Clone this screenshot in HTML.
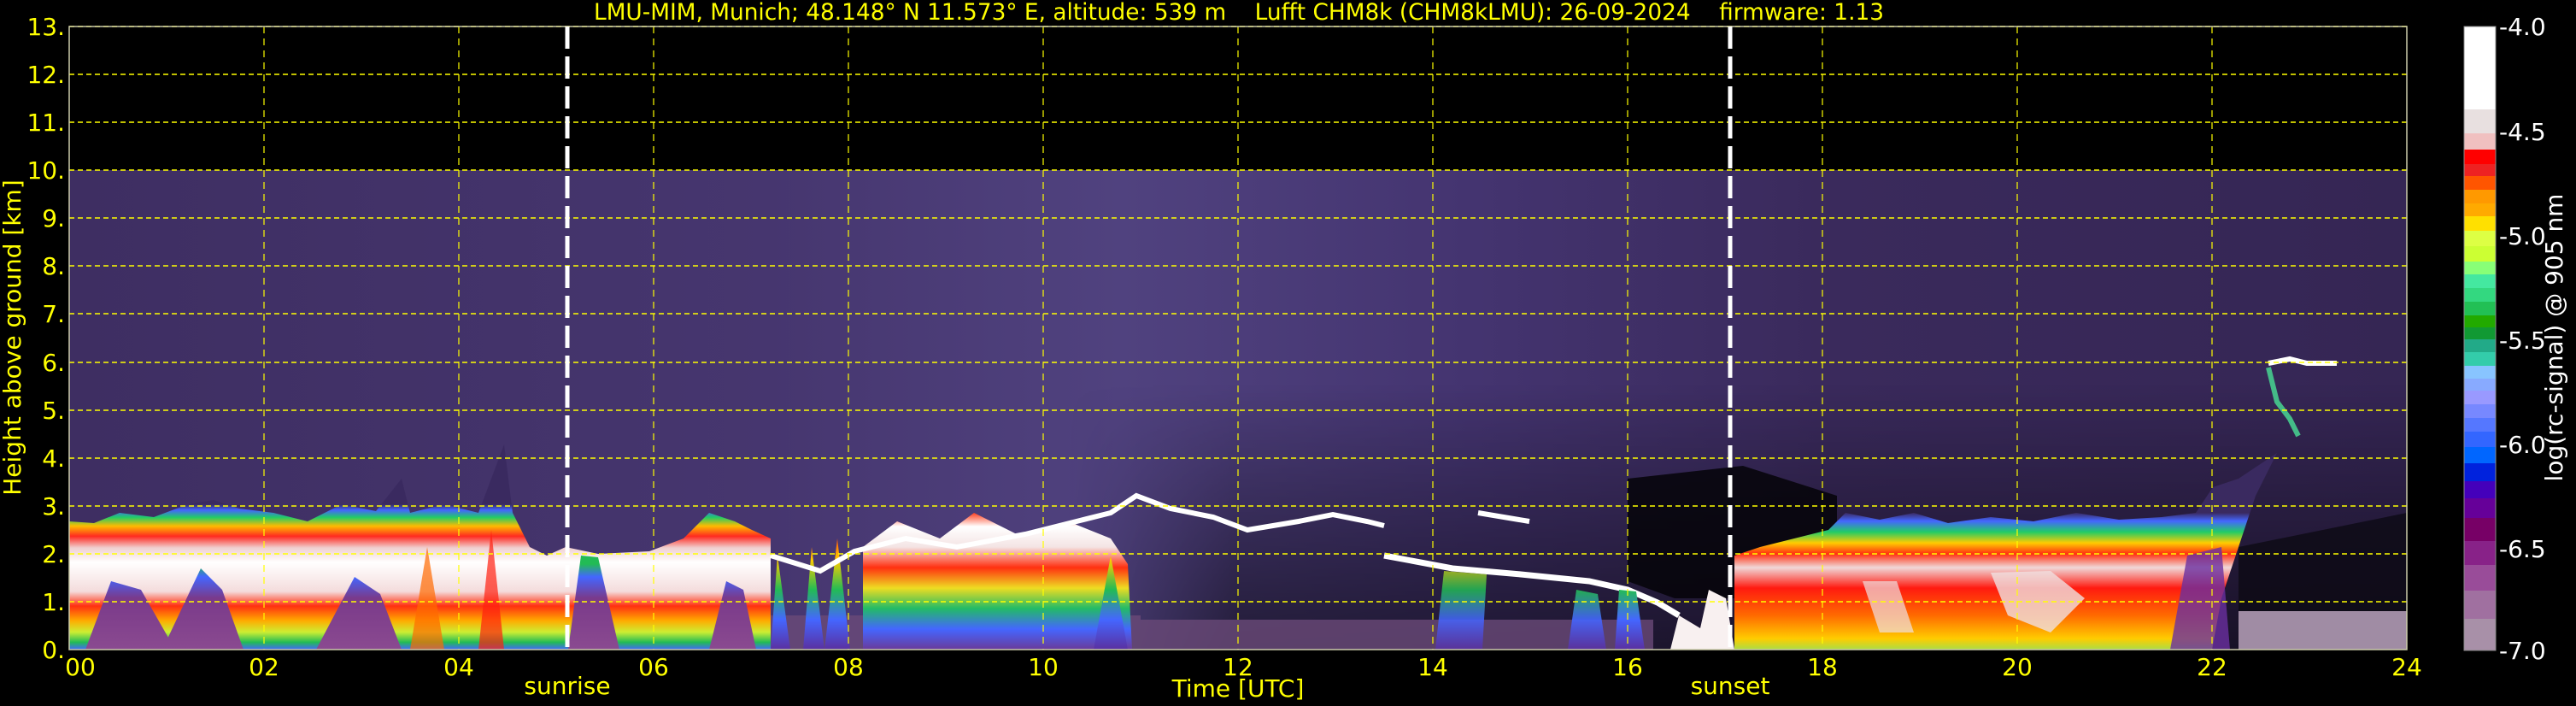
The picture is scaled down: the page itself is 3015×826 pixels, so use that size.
<!DOCTYPE html>
<html><head><meta charset="utf-8"><style>
html,body{margin:0;padding:0;background:#000;width:3015px;height:826px;overflow:hidden}
svg{display:block}
text{font-family:"DejaVu Sans","Liberation Sans",sans-serif;fill:#ffff00;white-space:pre}
</style></head><body>
<svg width="3015" height="826" viewBox="0 0 3015 826" xmlns="http://www.w3.org/2000/svg">
<defs>
<linearGradient id="noiseH" x1="81" x2="2817" y1="0" y2="0" gradientUnits="userSpaceOnUse">
<stop offset="0" stop-color="#3e2e62"/><stop offset="0.3" stop-color="#46366f"/>
<stop offset="0.45" stop-color="#50427f"/><stop offset="0.6" stop-color="#443470"/>
<stop offset="0.75" stop-color="#3a2a5c"/><stop offset="1" stop-color="#352654"/>
</linearGradient>
<linearGradient id="darkV" x1="0" x2="0" y1="760" y2="450" gradientUnits="userSpaceOnUse">
<stop offset="0" stop-color="#000" stop-opacity="0.55"/><stop offset="1" stop-color="#000" stop-opacity="0"/>
</linearGradient>
<linearGradient id="fadeX" x1="1250" x2="1450" y1="0" y2="0" gradientUnits="userSpaceOnUse">
<stop offset="0" stop-color="#fff" stop-opacity="0"/><stop offset="1" stop-color="#fff" stop-opacity="1"/>
</linearGradient>
<mask id="mX"><rect x="0" y="0" width="3015" height="826" fill="url(#fadeX)"/></mask>
<linearGradient id="gA" x1="0" x2="0" y1="760" y2="590" gradientUnits="userSpaceOnUse">
<stop offset="0" stop-color="#4466ff"/><stop offset="0.05" stop-color="#22bb55"/>
<stop offset="0.12" stop-color="#ccee33"/><stop offset="0.2" stop-color="#ffaa00"/>
<stop offset="0.3" stop-color="#ff3010"/><stop offset="0.4" stop-color="#f4dcdc"/>
<stop offset="0.6" stop-color="#ffffff"/><stop offset="0.7" stop-color="#f0d0d0"/>
<stop offset="0.78" stop-color="#ff2a20"/><stop offset="0.85" stop-color="#ffbb00"/>
<stop offset="0.91" stop-color="#22cc66"/><stop offset="0.96" stop-color="#4466ff"/>
<stop offset="1" stop-color="#3a2a60"/>
</linearGradient>
<linearGradient id="gC" x1="0" x2="0" y1="760" y2="600" gradientUnits="userSpaceOnUse">
<stop offset="0" stop-color="#6a3a9a"/><stop offset="0.15" stop-color="#4466ff"/>
<stop offset="0.3" stop-color="#22bb66"/><stop offset="0.45" stop-color="#eedd22"/>
<stop offset="0.6" stop-color="#ff3010"/><stop offset="0.75" stop-color="#f4e4e4"/>
<stop offset="0.9" stop-color="#ffffff"/><stop offset="1" stop-color="#ff4020"/>
</linearGradient>
<linearGradient id="gD" x1="0" x2="0" y1="760" y2="600" gradientUnits="userSpaceOnUse">
<stop offset="0" stop-color="#aadd44"/><stop offset="0.08" stop-color="#ffcc00"/>
<stop offset="0.25" stop-color="#ff6a00"/><stop offset="0.45" stop-color="#ff1a10"/>
<stop offset="0.6" stop-color="#f0d8d8"/><stop offset="0.7" stop-color="#ff3010"/>
<stop offset="0.78" stop-color="#ffcc00"/><stop offset="0.86" stop-color="#22cc66"/>
<stop offset="0.94" stop-color="#4466ff"/><stop offset="1" stop-color="#3a2a60"/>
</linearGradient>
<linearGradient id="gP" x1="0" x2="0" y1="760" y2="660" gradientUnits="userSpaceOnUse">
<stop offset="0" stop-color="#8a4a90"/><stop offset="0.6" stop-color="#7a3a8a"/><stop offset="0.85" stop-color="#4466ff"/><stop offset="1" stop-color="#22bb55"/>
</linearGradient>
<linearGradient id="gCol" x1="0" x2="0" y1="760" y2="620" gradientUnits="userSpaceOnUse">
<stop offset="0" stop-color="#5a30a0"/><stop offset="0.25" stop-color="#4466ff"/><stop offset="0.5" stop-color="#22bb55"/><stop offset="0.75" stop-color="#ffcc00"/><stop offset="1" stop-color="#ff2010"/>
</linearGradient>
</defs>

<rect x="81" y="199" width="2736" height="561" fill="url(#noiseH)"/>
<rect x="81" y="450" width="2736" height="310" fill="url(#darkV)" mask="url(#mX)"/>
<rect x="1335" y="725" width="600" height="35" fill="#6a4a78" opacity="0.8"/>
<rect x="902" y="720" width="433" height="40" fill="#6a4a78" opacity="0.8"/>
<polygon points="1905,560 2040,545 2150,580 2150,700 1960,700 1905,680" fill="#050308" opacity="0.85"/>
<polygon points="2620,640 2817,600 2817,715 2620,720" fill="#0c0a14" opacity="0.8"/>
<rect x="2620" y="715" width="197" height="45" fill="#a08ca4"/>

<polygon fill="url(#gA)" points="81,610 110,612 140,600 180,605 220,590 250,585 280,595 320,600 360,610 400,590 440,598 470,560 480,600 520,590 560,600 590,520 600,600 620,640 640,650 662,640 662,760 81,760"/>
<polygon fill="url(#gA)" points="662,640 700,648 760,645 800,630 830,600 860,610 880,620 902,630 902,760 662,760"/>
<polygon fill="url(#gP)" points="100,760 130,680 165,690 205,760"/>
<polygon fill="url(#gP)" points="190,760 235,665 260,690 285,760"/>
<polygon fill="url(#gP)" points="370,760 415,675 445,695 470,760"/>
<polygon fill="url(#gP)" points="665,760 680,650 700,652 725,760"/>
<polygon fill="url(#gP)" points="830,760 850,680 870,690 885,760"/>
<polygon fill="#ff6a00" points="480,760 500,640 520,760" opacity="0.7"/>
<polygon fill="#ff2010" points="560,760 575,620 590,760" opacity="0.7"/>

<polygon fill="url(#gC)" points="1010,760 1010,640 1050,610 1100,630 1140,600 1190,625 1250,610 1300,630 1320,660 1325,760"/>
<polygon fill="url(#gCol)" points="902,760 910,650 925,760"/>
<polygon fill="url(#gCol)" points="940,760 950,640 965,760"/>
<polygon fill="url(#gCol)" points="965,760 980,630 995,760"/>
<polygon fill="url(#gCol)" points="1280,760 1300,650 1320,760"/>
<path d="M902,650 L960,668 1000,645 1060,630 1120,640 1200,625 1260,610 1300,600 1330,580 1370,595 1420,605 1460,620 1520,610 1560,602 1600,610 1620,615" stroke="#fff" stroke-width="6" fill="none"/>
<path d="M1620,650 L1700,665 1780,672 1860,680 1905,690 1940,705 1965,720" stroke="#fff" stroke-width="7" fill="none"/>
<path d="M1730,600 L1790,610" stroke="#fff" stroke-width="6"/>
<polygon fill="url(#gCol)" points="1680,760 1690,668 1740,672 1735,760" opacity="0.85"/>
<polygon fill="url(#gCol)" points="1835,760 1845,690 1870,695 1880,760" opacity="0.9"/>
<polygon fill="url(#gCol)" points="1890,760 1895,690 1915,692 1925,760"/>
<polygon fill="#f8f0f0" points="1955,760 1965,720 1990,735 2000,690 2020,700 2030,760"/>

<polygon fill="url(#gD)" points="2030,760 2030,650 2060,640 2100,630 2140,620 2160,600 2200,608 2240,600 2280,612 2330,605 2380,610 2430,600 2480,608 2530,605 2570,600 2590,570 2620,560 2650,540 2665,530 2640,580 2620,640 2600,700 2589,760"/>
<polygon fill="#f0e0e0" points="2180,680 2220,680 2240,740 2200,740" opacity="0.7"/>
<polygon fill="#f0e0e0" points="2330,670 2400,668 2440,700 2400,740 2350,720" opacity="0.8"/>
<polygon fill="#6a30a0" points="2540,760 2560,650 2600,640 2610,760" opacity="0.8"/>
<path d="M2655,425 L2680,420 2700,425 2735,425" stroke="#fff" stroke-width="6" fill="none"/>
<path d="M2655,430 L2665,470 2680,490 2690,510" stroke="#44bb88" stroke-width="6" fill="none"/>

<g stroke="#ffff00" stroke-width="1.5" stroke-dasharray="6,4">
<line x1="81" x2="2817" y1="704" y2="704"/><line x1="81" x2="2817" y1="648" y2="648"/>
<line x1="81" x2="2817" y1="592" y2="592"/><line x1="81" x2="2817" y1="536" y2="536"/>
<line x1="81" x2="2817" y1="480" y2="480"/><line x1="81" x2="2817" y1="424" y2="424"/>
<line x1="81" x2="2817" y1="367" y2="367"/><line x1="81" x2="2817" y1="311" y2="311"/>
<line x1="81" x2="2817" y1="255" y2="255"/><line x1="81" x2="2817" y1="199" y2="199"/>
<line x1="81" x2="2817" y1="143" y2="143"/><line x1="81" x2="2817" y1="87" y2="87"/>
<line x1="81" x2="2817" y1="31" y2="31"/>
</g>
<g stroke="#ffff00" stroke-width="1.2" stroke-dasharray="8,6">
<line x1="309" x2="309" y1="31" y2="760"/><line x1="537" x2="537" y1="31" y2="760"/>
<line x1="765" x2="765" y1="31" y2="760"/><line x1="993" x2="993" y1="31" y2="760"/>
<line x1="1221" x2="1221" y1="31" y2="760"/><line x1="1449" x2="1449" y1="31" y2="760"/>
<line x1="1677" x2="1677" y1="31" y2="760"/><line x1="1905" x2="1905" y1="31" y2="760"/>
<line x1="2133" x2="2133" y1="31" y2="760"/><line x1="2361" x2="2361" y1="31" y2="760"/>
<line x1="2589" x2="2589" y1="31" y2="760"/>
</g>
<rect x="81" y="31" width="2736" height="729" fill="none" stroke="#ccccaa" stroke-width="1.5"/>
<g stroke="#fff" stroke-width="5" stroke-dasharray="26,9">
<line x1="664" x2="664" y1="31" y2="760"/><line x1="2025" x2="2025" y1="31" y2="760"/>
</g>

<text x="1450" y="23" font-size="27" text-anchor="middle" textLength="1510" lengthAdjust="spacingAndGlyphs" xml:space="preserve">LMU-MIM, Munich; 48.148° N 11.573° E, altitude: 539 m    Lufft CHM8k (CHM8kLMU): 26-09-2024    firmware: 1.13</text>

<g font-size="28" text-anchor="end">
<text x="76" y="770">0.</text><text x="76" y="714">1.</text><text x="76" y="658">2.</text>
<text x="76" y="602">3.</text><text x="76" y="546">4.</text><text x="76" y="490">5.</text>
<text x="76" y="434">6.</text><text x="76" y="377">7.</text><text x="76" y="321">8.</text>
<text x="76" y="265">9.</text><text x="76" y="209">10.</text><text x="76" y="153">11.</text>
<text x="76" y="97">12.</text><text x="76" y="41">13.</text>
</g>
<text transform="translate(24,395) rotate(-90)" font-size="28" text-anchor="middle">Height above ground [km]</text>

<g font-size="28" text-anchor="middle">
<text x="94" y="790">00</text><text x="309" y="790">02</text><text x="537" y="790">04</text>
<text x="765" y="790">06</text><text x="993" y="790">08</text><text x="1221" y="790">10</text>
<text x="1449" y="790">12</text><text x="1677" y="790">14</text><text x="1905" y="790">16</text>
<text x="2133" y="790">18</text><text x="2361" y="790">20</text><text x="2589" y="790">22</text>
<text x="2817" y="790">24</text>
<text x="664" y="812">sunrise</text><text x="2025" y="812">sunset</text>
<text x="1449" y="815">Time [UTC]</text>
</g>

<g>
<rect x="2884" y="31" width="37" height="97" fill="#ffffff"/>
<rect x="2884" y="128" width="37" height="28" fill="#e8e0e0"/>
<rect x="2884" y="156" width="37" height="19" fill="#f0c0c0"/>
<rect x="2884" y="175" width="37" height="17" fill="#ff0000"/>
<rect x="2884" y="192" width="37" height="14" fill="#ee2222"/>
<rect x="2884" y="206" width="37" height="16" fill="#ff5500"/>
<rect x="2884" y="222" width="37" height="16" fill="#ff9900"/>
<rect x="2884" y="238" width="37" height="15" fill="#ffaa00"/>
<rect x="2884" y="253" width="37" height="17" fill="#ffe000"/>
<rect x="2884" y="270" width="37" height="18" fill="#ddff44"/>
<rect x="2884" y="288" width="37" height="18" fill="#ccff33"/>
<rect x="2884" y="306" width="37" height="15" fill="#88ff77"/>
<rect x="2884" y="321" width="37" height="16" fill="#44e8a0"/>
<rect x="2884" y="337" width="37" height="16" fill="#33d880"/>
<rect x="2884" y="353" width="37" height="16" fill="#22c055"/>
<rect x="2884" y="369" width="37" height="14" fill="#22aa00"/>
<rect x="2884" y="383" width="37" height="14" fill="#119933"/>
<rect x="2884" y="397" width="37" height="15" fill="#22aa88"/>
<rect x="2884" y="412" width="37" height="16" fill="#33ccaa"/>
<rect x="2884" y="428" width="37" height="15" fill="#88c4ff"/>
<rect x="2884" y="443" width="37" height="14" fill="#88aaff"/>
<rect x="2884" y="457" width="37" height="16" fill="#9999ff"/>
<rect x="2884" y="473" width="37" height="16" fill="#7788ff"/>
<rect x="2884" y="489" width="37" height="16" fill="#5577ff"/>
<rect x="2884" y="505" width="37" height="18" fill="#3366ff"/>
<rect x="2884" y="523" width="37" height="19" fill="#0066ff"/>
<rect x="2884" y="542" width="37" height="21" fill="#0022dd"/>
<rect x="2884" y="563" width="37" height="20" fill="#4400bb"/>
<rect x="2884" y="583" width="37" height="23" fill="#660099"/>
<rect x="2884" y="606" width="37" height="27" fill="#770066"/>
<rect x="2884" y="633" width="37" height="28" fill="#882288"/>
<rect x="2884" y="661" width="37" height="30" fill="#994c99"/>
<rect x="2884" y="691" width="37" height="33" fill="#a070a0"/>
<rect x="2884" y="724" width="37" height="37" fill="#a890a8"/>
<rect x="2884" y="31" width="37" height="730" fill="none" stroke="#888" stroke-width="1"/>
</g>
<g font-size="28">
<text x="2925" y="41" style="fill:#fff">-4.0</text>
<text x="2925" y="164" style="fill:#fff">-4.5</text>
<text x="2925" y="286" style="fill:#fff">-5.0</text>
<text x="2925" y="408" style="fill:#fff">-5.5</text>
<text x="2925" y="530" style="fill:#fff">-6.0</text>
<text x="2925" y="652" style="fill:#fff">-6.5</text>
<text x="2925" y="771" style="fill:#fff">-7.0</text>
</g>
<text transform="translate(2999,395) rotate(-90)" font-size="28" text-anchor="middle" style="fill:#fff">log(rc-signal) @ 905 nm</text>
</svg>
</body></html>
